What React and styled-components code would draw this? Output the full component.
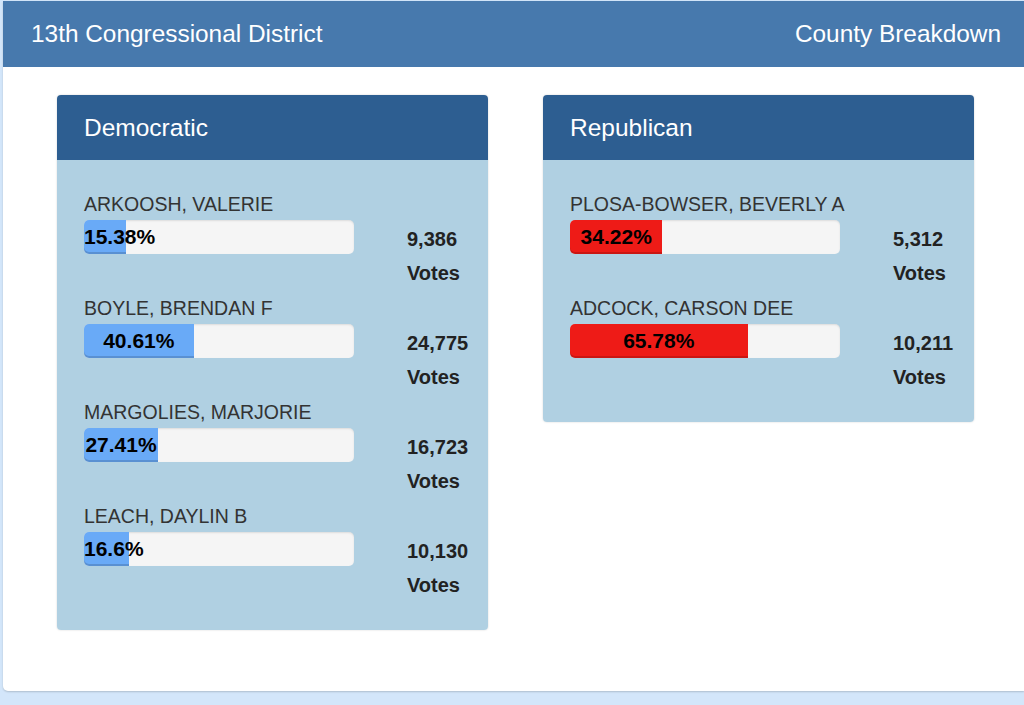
import React from "react";
import styled, { createGlobalStyle } from "styled-components";

const GlobalStyle = createGlobalStyle`
  html, body {
    margin: 0;
    padding: 0;
    background: #d3e6fa;
    font-family: "Liberation Sans", Arial, sans-serif;
    overflow: hidden;
  }
`;

const Page = styled.div`
  padding: 1px 0 13px 3px;
  height: 705px;
  box-sizing: border-box;
`;

const Panel = styled.div`
  background: #fff;
  border-radius: 0 0 0 5px;
  box-shadow: 0 1px 2px rgba(0, 0, 0, 0.18);
  height: 690px;
  box-sizing: border-box;
  display: flex;
  flex-direction: column;
`;

const PanelHeader = styled.div`
  background: #4779ad;
  height: 66px;
  display: flex;
  align-items: center;
  justify-content: space-between;
  padding: 0 23px 0 28px;
  color: #fff;
  font-size: 24.4px;
`;

const Columns = styled.div`
  display: grid;
  grid-template-columns: 431px 431px;
  column-gap: 55px;
  align-items: start;
  padding: 28px 0 0 54px;
`;

const Card = styled.div`
  border-radius: 4px;
  overflow: hidden;
  box-shadow: 0 0 2px rgba(0, 0, 0, 0.18);
`;

const CardHeader = styled.div`
  background: #2d5e91;
  height: 65px;
  display: flex;
  align-items: center;
  padding: 0 27px;
  color: #fff;
  font-size: 24.5px;
`;

const CardBody = styled.div`
  background: #b0d0e2;
  padding: 30px 27px 24px;
`;

const Candidate = styled.div`
  margin-bottom: 4px;
`;

const Name = styled.div`
  font-size: 19.5px;
  line-height: 28px;
  color: #333;
  height: 28px;
  white-space: nowrap;
`;

const Row = styled.div`
  display: flex;
  margin-top: 2px;
`;

const Track = styled.div`
  flex: 0 0 270px;
  width: 270px;
  height: 34px;
  background: #f5f5f5;
  border-radius: 5px;
  box-shadow: inset 0 1px 2px rgba(0, 0, 0, 0.1);
  display: flex;
`;

const Fill = styled.div`
  height: 100%;
  background: ${(p) => (p.$party === "rep" ? "#ee1b17" : "#69aaf7")};
  border-radius: 5px 0 0 5px;
  box-shadow: inset 0 -2px 0 rgba(0, 0, 0, 0.15);
  color: #000;
  font-weight: bold;
  font-size: 21px;
  line-height: 34px;
  text-align: center;
  white-space: nowrap;
`;

const Votes = styled.div`
  flex: 0 0 auto;
  margin-left: 53px;
  padding-top: 2px;
  font-weight: bold;
  font-size: 20px;
  line-height: 34px;
  color: #222;
  white-space: nowrap;
`;

const dem = [
  { name: "ARKOOSH, VALERIE", pct: "15.38", votes: "9,386" },
  { name: "BOYLE, BRENDAN F", pct: "40.61", votes: "24,775" },
  { name: "MARGOLIES, MARJORIE", pct: "27.41", votes: "16,723" },
  { name: "LEACH, DAYLIN B", pct: "16.6", votes: "10,130" },
];

const rep = [
  { name: "PLOSA-BOWSER, BEVERLY A", pct: "34.22", votes: "5,312" },
  { name: "ADCOCK, CARSON DEE", pct: "65.78", votes: "10,211" },
];

function PartyCard({ title, party, list }) {
  return (
    <Card>
      <CardHeader>{title}</CardHeader>
      <CardBody>
        {list.map((c) => (
          <Candidate key={c.name}>
            <Name>{c.name}</Name>
            <Row>
              <Track>
                <Fill $party={party} style={{ width: `${c.pct}%` }}>
                  {c.pct}%
                </Fill>
              </Track>
              <Votes>
                {c.votes}
                <br />
                Votes
              </Votes>
            </Row>
          </Candidate>
        ))}
      </CardBody>
    </Card>
  );
}

export default function App() {
  return (
    <Page>
      <GlobalStyle />
      <Panel>
        <PanelHeader>
          <span>13th Congressional District</span>
          <span>County Breakdown</span>
        </PanelHeader>
        <Columns>
          <PartyCard title="Democratic" party="dem" list={dem} />
          <PartyCard title="Republican" party="rep" list={rep} />
        </Columns>
      </Panel>
    </Page>
  );
}
